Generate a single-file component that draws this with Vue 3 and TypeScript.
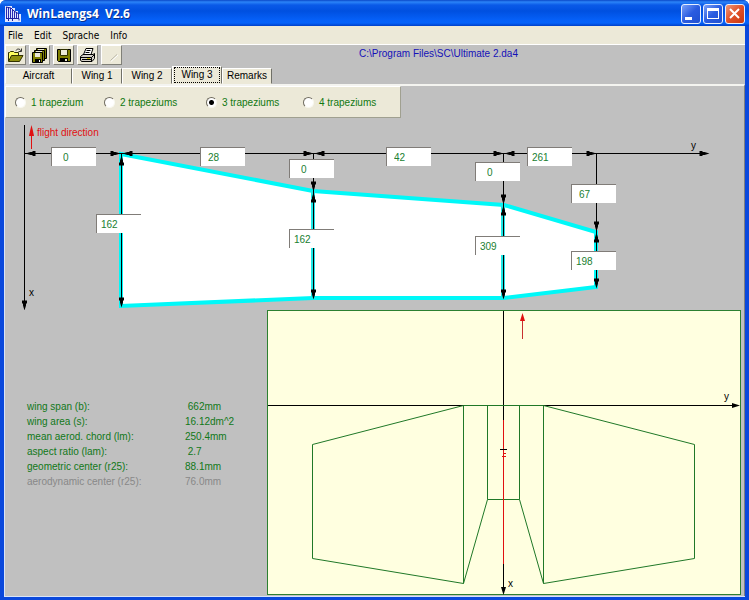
<script setup lang="ts">
import { ref } from 'vue'

interface DimField {
  id: string
  label: string
  x: number
  y: number
  value: string
}
interface Arrow {
  x: number
  y: number
  angle: number
}

const menus = ['File', 'Edit', 'Sprache', 'Info']
const tabs = ['Aircraft', 'Wing 1', 'Wing 2', 'Wing 3', 'Remarks']
const activeTab = ref('Wing 3')
const counts = ['1 trapezium', '2 trapeziums', '3 trapeziums', '4 trapeziums']
const count = ref('3 trapeziums')

const fields = ref<DimField[]>([
  { id: 'w0', label: 'Root offset', x: 51, y: 147, value: '0' },
  { id: 'w1', label: 'Width of trapezium 1', x: 200, y: 147, value: '28' },
  { id: 'w2', label: 'Width of trapezium 2', x: 386, y: 147, value: '42' },
  { id: 'w3', label: 'Width of trapezium 3', x: 527, y: 147, value: '261' },
  { id: 's1', label: 'Sweep of trapezium 1', x: 289, y: 159, value: '0' },
  { id: 's2', label: 'Sweep of trapezium 2', x: 475, y: 162, value: '0' },
  { id: 's3', label: 'Sweep of trapezium 3', x: 571, y: 184, value: '67' },
  { id: 'c0', label: 'Root chord', x: 96, y: 214, value: '162' },
  { id: 'c1', label: 'Chord 1', x: 289, y: 229, value: '162' },
  { id: 'c2', label: 'Chord 2', x: 475, y: 236, value: '309' },
  { id: 'c3', label: 'Tip chord', x: 571, y: 251, value: '198' },
])

// angle 0 points right, 90 points down
const arrows: Arrow[] = [
  { x: 25, y: 153, angle: 180 },
  { x: 120, y: 153, angle: 0 },
  { x: 122, y: 153, angle: 180 },
  { x: 313, y: 153, angle: 0 },
  { x: 314, y: 153, angle: 180 },
  { x: 503, y: 153, angle: 0 },
  { x: 504, y: 153, angle: 180 },
  { x: 596, y: 153, angle: 0 },
  { x: 709, y: 153, angle: 0 },
  { x: 24, y: 310, angle: 90 },
  { x: 121, y: 155, angle: -90 },
  { x: 121, y: 307, angle: 90 },
  { x: 313, y: 191, angle: 90 },
  { x: 313, y: 192, angle: -90 },
  { x: 313, y: 299, angle: 90 },
  { x: 503, y: 204, angle: 90 },
  { x: 503, y: 205, angle: -90 },
  { x: 503, y: 299, angle: 90 },
  { x: 596, y: 231, angle: 90 },
  { x: 596, y: 232, angle: -90 },
  { x: 596, y: 288, angle: 90 },
]

const stats = [
  { label: 'wing span (b):', value: ' 662mm', dim: false },
  { label: 'wing area (s):', value: '16.12dm^2', dim: false },
  { label: 'mean aerod. chord (lm):', value: '250.4mm', dim: false },
  { label: 'aspect ratio (lam):', value: ' 2.7', dim: false },
  { label: 'geometric center (r25):', value: '88.1mm', dim: false },
  { label: 'aerodynamic center (r25):', value: '76.0mm', dim: true },
]
</script>

<template>
  <div class="window">
    <header class="titlebar">
      <svg class="app-icon" width="16" height="16" viewBox="0 0 16 16" aria-hidden="true">
        <path d="M0 0H7V2H10V5H13V8H16V16H0Z" fill="#dfe6ff" />
        <path d="M1.500 1v11M3.500 1v11M5.500 2v10M7.500 3v9M9.500 5v7M11.500 6v6M13.500 8v5" stroke="#2828b0" />
        <path d="M1 1l5 1 3 3 5 3M1 12.500h13v2M3.500 13v2M7.500 13v2" fill="none" stroke="#2020a0" />
      </svg>
      <h1>WinLaengs4&nbsp; V2.6</h1>
      <div class="controls">
        <button type="button" class="ctl" aria-label="Minimize">
          <svg width="20" height="20" viewBox="0 0 20 20"><path d="M4 13h7v3H4z" fill="#fff" /></svg>
        </button>
        <button type="button" class="ctl" aria-label="Maximize">
          <svg width="20" height="20" viewBox="0 0 20 20"><path d="M4 4h12v11H4zM5 7v7h10V7z" fill="#fff" fill-rule="evenodd" /></svg>
        </button>
        <button type="button" class="ctl close" aria-label="Close">
          <svg width="20" height="20" viewBox="0 0 20 20"><path d="M5 5l9 9M14 5l-9 9" stroke="#fff" stroke-width="2" /></svg>
        </button>
      </div>
    </header>

    <div class="client">
      <nav class="menubar">
        <button v-for="m in menus" :key="m" type="button">{{ m }}</button>
      </nav>

      <div class="toolbar">
        <div class="tools">
          <button type="button" aria-label="Open">
            <svg width="17" height="17" viewBox="0 0 17 17">
              <path d="M1.500 14V5.500h1l1-1h3l1 1h4v3" fill="#ffff60" stroke="#303000" />
              <path d="M1.500 14.500L4.500 8.500H16L12.500 14.500Z" fill="#909010" stroke="#303000" />
              <path d="M9 3.500C10 1.500 13 1.500 14 4M14.500 1.500V4.500H11.500" fill="none" stroke="#303030" />
            </svg>
          </button>
          <button type="button" aria-label="Save all">
            <svg width="17" height="17" viewBox="0 0 17 17">
              <path d="M5.500 1.500h10v10h-10z" fill="#808000" stroke="#000" />
              <path d="M7 2h6v3H7z" fill="#ece9d8" />
              <path d="M3.500 3.500h10v10h-10z" fill="#808000" stroke="#000" />
              <path d="M5 4h6v3H5z" fill="#ece9d8" />
              <path d="M1.500 5.500h10v10h-10z" fill="#808000" stroke="#000" />
              <path d="M4 6h5v4H4z" fill="#ece9d8" />
              <path d="M4 12h6v4H4z" fill="#000" /><path d="M8 13h1v2H8z" fill="#fff" />
            </svg>
          </button>
          <button type="button" aria-label="Save">
            <svg width="17" height="17" viewBox="0 0 17 17">
              <path d="M2.500 2.500h13v12h-12l-1-1z" fill="#808000" stroke="#000" />
              <path d="M5.500 2.500h7v6h-7z" fill="#ece9d8" stroke="#303000" />
              <path d="M5 11h8v4H5z" fill="#000" /><path d="M10 12h2v2h-2z" fill="#ece9d8" />
            </svg>
          </button>
          <button type="button" aria-label="Print">
            <svg width="17" height="17" viewBox="0 0 17 17">
              <path d="M4.500 7.500L7 1.500H14L12 7.500" fill="#fff" stroke="#000" />
              <path d="M7.500 3.500h4M6.500 5.500h4" stroke="#000" />
              <path d="M1.500 9.500L4 7.500H14L15.500 6.500V11.500L13 14.500H2.500L1.500 13Z" fill="#d4d0c8" stroke="#000" />
              <path d="M2 10.500H12.500L15 8M12.500 10.500V14M3 12.500H12" fill="none" stroke="#000" />
              <path d="M8 11h3v1H8z" fill="#d0c000" />
            </svg>
          </button>
          <button type="button" aria-label="Draw" disabled>
            <svg width="17" height="17" viewBox="0 0 17 17"><path d="M7.500 13.500L14 7.500" stroke="#b8b5a4" /><path d="M8 14.500L15 8" stroke="#fff" /></svg>
          </button>
        </div>
        <p class="path">C:\Program Files\SC\Ultimate 2.da4</p>
      </div>

      <div class="tabs" role="tablist">
        <button
          v-for="t in tabs"
          :key="t"
          type="button"
          role="tab"
          :aria-selected="t === activeTab"
          :class="{ active: t === activeTab }"
          @click="activeTab = t"
        ><span>{{ t }}</span></button>
      </div>

      <main class="page">
        <div class="counts" role="radiogroup" aria-label="Number of trapeziums">
          <label v-for="c in counts" :key="c">
            <input v-model="count" type="radio" name="count" :value="c" />
            <span>{{ c }}</span>
          </label>
        </div>

        <svg class="planform" viewBox="5 118 739 192">
          <polygon
            points="121,154 313,191 504,205 596,232 596,287 504,298 313,298 121,306"
            fill="#fff" stroke="#00f8f8" stroke-width="4"
          />
          <path d="M313 191V298M503 205V298" stroke="#20e8e8" stroke-width="4" />
          <g class="lines">
            <path d="M24.500 125V306M25 153.500H705" />
            <path d="M121.500 154V306M313.500 153V298M503.500 153V298M596.500 153V287" />
          </g>
          <path
            v-for="(a, i) in arrows"
            :key="i"
            d="M0 0L-5 -1.500H-7V-2.500H-10V2.500H-7V1.500H-5Z"
            :transform="`translate(${a.x + 0.5} ${a.y + 0.5}) rotate(${a.angle})`"
          />
          <path d="M31.500 149V134" stroke="#e01010" fill="none" />
          <path d="M31.500 125L33 131L34 136H29L30 131Z" fill="#e01010" />
          <text x="37" y="136" class="red">flight direction</text>
          <text x="691" y="149">y</text>
          <text x="29" y="296">x</text>
          <foreignObject v-for="f in fields" :key="f.id" :x="f.x" :y="f.y" width="46" height="20">
            <input
              v-model="f.value"
              class="dim"
              :class="`digits-${f.value.length}`"
              type="text"
              :aria-label="f.label"
            />
          </foreignObject>
        </svg>

        <div class="lower">
          <dl class="stats">
            <div v-for="s in stats" :key="s.label" :class="{ off: s.dim }">
              <dt>{{ s.label }}</dt>
              <dd>{{ s.value }}</dd>
            </div>
          </dl>
          <svg class="preview" viewBox="267 310 474 285">
            <rect x="267.500" y="310.500" width="473" height="284" fill="#ffffe0" stroke="#2c8030" />
            <path d="M268 405.500H738M503.500 311V420M503.500 564V592" stroke="#000" />
            <g fill="none" stroke="#207828">
              <path d="M463.500 405.500L312.500 444.500V558.500L463.500 583.500ZM543.500 405.500L694.500 444.500V558.500L543.500 583.500Z" />
              <path d="M463.500 405.500H543.500M487.500 405.500V499.500H519.500V405.500M487.500 499.500L463.500 583.500M519.500 499.500L543.500 583.500" />
            </g>
            <path d="M503.500 420V564M502 456.500H506M504 453.500H506" stroke="#e01010" />
            <path d="M500 449.500H507" stroke="#000" />
            <path d="M740 405.500L732 403V408ZM503.500 595L501 587H506Z" />
            <path d="M522.500 339V320" stroke="#c83030" />
            <path d="M522.500 313L525 321H520Z" fill="#e01010" />
            <text x="724" y="400">y</text>
            <text x="508" y="587">x</text>
          </svg>
        </div>
      </main>
    </div>
  </div>
</template>

<style>
body {
  margin: 0;
  background: #fff;
}
</style>

<style scoped>
* {
  box-sizing: border-box;
}
.window {
  min-height: 100vh;
  display: flex;
  flex-direction: column;
  background: #0a48dc;
  border-radius: 6px 6px 0 0;
  padding: 0 4px 3px;
  font: 10px/15px "Liberation Sans", sans-serif;
  color: #000;
}
button {
  font: inherit;
  color: inherit;
  margin: 0;
  padding: 0;
  border: 0;
  background: none;
}
.titlebar {
  display: flex;
  align-items: center;
  height: 26px;
  margin: 0 -4px;
  padding: 1px 4px 0 5px;
  border-radius: 6px 6px 0 0;
  background: linear-gradient(#0a48c8 0, #2b84f8 2px, #0a5ae8 5px, #0050e0 11px, #0560f8 20px, #0563fa 23px, #0040c8 26px);
}
h1 {
  flex: 1;
  margin: 0 0 0 6px;
  font: bold 12px/18px "Open Sans", sans-serif;
  color: #fff;
  text-shadow: 1px 1px #08308c;
}
.controls {
  display: flex;
  gap: 2px;
}
.ctl {
  width: 20px;
  height: 20px;
  border: 1px solid #e8f0ff;
  border-radius: 3px;
  background: linear-gradient(135deg, #7aa0f8, #2a5ce0 50%, #2050d0);
}
.ctl svg {
  display: block;
  margin: -1px;
}
.close {
  background: linear-gradient(135deg, #f09878, #e05028 50%, #c83810);
}
.client {
  flex: 1;
  display: flex;
  flex-direction: column;
  background: #c0c0c0;
  border-left: 1px solid #d8e4f8;
  border-bottom: 1px solid #d8e4f8;
}
.menubar {
  display: flex;
  gap: 11px;
  height: 19px;
  padding-left: 3px;
  background: #ece9d8;
  border-bottom: 1px solid #fff;
  font: 10px/17px "DejaVu Sans Condensed", "DejaVu Sans", sans-serif;
}
.toolbar {
  display: flex;
  height: 21px;
}
.tools {
  display: flex;
  gap: 3px;
}
.tools button {
  width: 21px;
  height: 20px;
  background: #ece9d8;
  border: 1px solid;
  border-color: #fff #808078 #808078 #fff;
}
.tools svg {
  display: block;
  margin: 1px;
}
.path {
  margin: 1px 0 0 237px;
  color: #1410b8;
}
.tabs {
  display: flex;
  align-items: flex-end;
  height: 18px;
}
.tabs button {
  flex: 0 0 auto;
  min-width: 50px;
  height: 16px;
  padding: 0 4px;
  background: #ece9d8;
  border: 1px solid;
  border-color: #fff #707068 #ece9d8 #fff;
  line-height: 14px;
}
.tabs button:first-child {
  min-width: 67px;
}
.tabs .active {
  height: 18px;
  padding: 0 1px;
  line-height: 14px;
}
.tabs .active span {
  display: block;
  border: 1px dotted #000;
}
.page {
  flex: 1;
  display: flex;
  flex-direction: column;
  border-top: 2px solid #f4f4f0;
  border-right: 1px solid #808080;
}
.counts {
  align-self: flex-start;
  display: grid;
  grid-template-columns: 89px 102px 97px 98px;
  align-items: center;
  width: 396px;
  height: 32px;
  padding-left: 9px;
  background: #ece9d8;
  border: 1px solid;
  border-color: #fff #a0a090 #a0a090 #fff;
  color: #107810;
}
.counts label {
  display: flex;
  align-items: center;
  gap: 5px;
}
.counts input {
  appearance: none;
  width: 11px;
  height: 11px;
  margin: 0;
  border: 1px solid;
  border-color: #706c60 #f8f8f0 #f8f8f0 #706c60;
  border-radius: 50%;
  background: #fff;
}
.counts input:checked {
  background: radial-gradient(circle, #000 0 2px, #fff 3px);
}
.planform {
  display: block;
  width: 100%;
  height: auto;
}
.lines {
  stroke: #000;
}
.red {
  fill: #e01010;
}
.dim {
  display: block;
  width: 45px;
  height: 19px;
  margin: 0;
  padding: 0 0 0 4px;
  border: 0 solid #807c78;
  border-width: 1px 0 0 1px;
  border-radius: 0;
  background: #fff;
  color: #208030;
  font: inherit;
}
.digits-2 {
  padding-left: 7px;
}
.digits-1 {
  padding-left: 11px;
}
.lower {
  flex: 1;
  display: flex;
  padding-right: 3px;
}
.stats {
  flex: 0 0 262px;
  margin: 0;
  padding: 89px 0 0 22px;
  color: #107818;
}
.stats div {
  display: grid;
  grid-template-columns: 158px 1fr;
}
.stats dd {
  margin: 0;
  white-space: pre;
}
.stats .off {
  color: #888;
}
.preview {
  flex: 1;
  align-self: flex-start;
  min-width: 0;
  height: auto;
}
</style>
